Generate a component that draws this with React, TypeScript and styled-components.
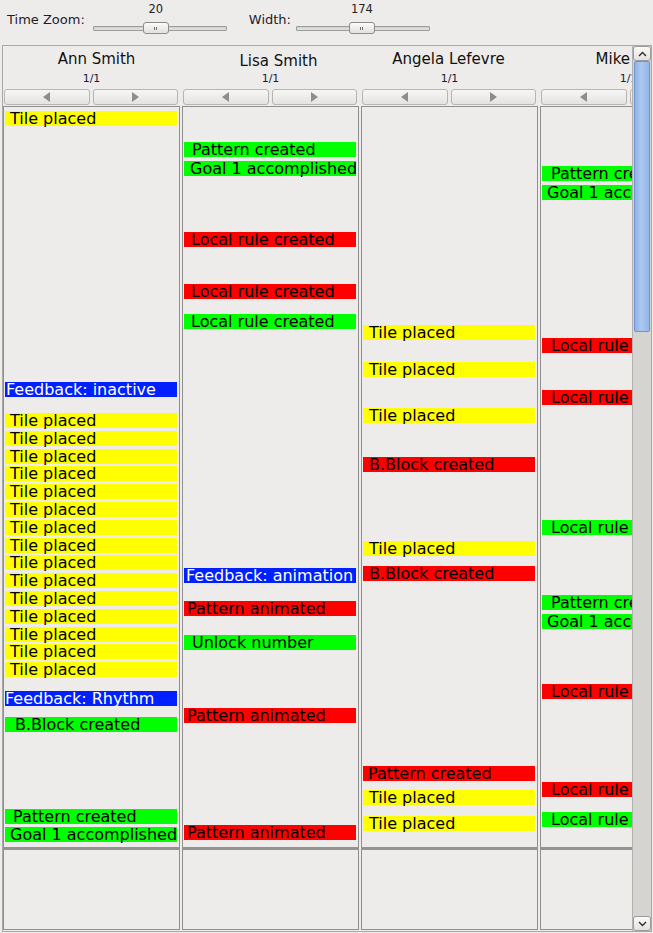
import React from "react";
import styled, { createGlobalStyle } from "styled-components";

type Kind = "y" | "g" | "r" | "b";
type Ev = [number, Kind, string, number];

interface ColumnData {
  name: string;
  shift: number;
  drop: number;
  events: Ev[];
}

const FILL: Record<Kind, string> = {
  y: "#ffff00",
  g: "#00ff00",
  r: "#ff0000",
  b: "#0020ff",
};

const tiles: Ev[] = Array.from({ length: 15 }, (_, i) => [
  Math.round(306 + i * 17.8),
  "y",
  "Tile placed",
  5,
]);

const COLUMNS: ColumnData[] = [
  {
    name: "Ann Smith",
    shift: 5,
    drop: 0,
    events: [
      [4, "y", "Tile placed", 5],
      [275, "b", "Feedback: inactive", 1],
      ...tiles,
      [584, "b", "Feedback: Rhythm", 0],
      [610, "g", "B.Block created", 10],
      [702, "g", "Pattern created", 8],
      [720, "g", "Goal 1 accomplished", 5],
    ],
  },
  {
    name: "Lisa Smith",
    shift: 8,
    drop: 2,
    events: [
      [35, "g", "Pattern created", 8],
      [54, "g", "Goal 1 accomplished", 6],
      [125, "r", "Local rule created", 7],
      [177, "r", "Local rule created", 7],
      [207, "g", "Local rule created", 7],
      [461, "b", "Feedback: animation", 2],
      [494, "r", "Pattern animated", 3],
      [528, "g", "Unlock number", 8],
      [601, "r", "Pattern animated", 3],
      [718, "r", "Pattern animated", 3],
    ],
  },
  {
    name: "Angela Lefevre",
    shift: -1,
    drop: 0,
    events: [
      [218, "y", "Tile placed", 6],
      [255, "y", "Tile placed", 6],
      [301, "y", "Tile placed", 6],
      [350, "r", "B.Block created", 6],
      [434, "y", "Tile placed", 6],
      [459, "r", "B.Block created", 6],
      [659, "r", "Pattern created", 5],
      [683, "y", "Tile placed", 6],
      [709, "y", "Tile placed", 6],
    ],
  },
  {
    name: "Mike Lee",
    shift: 0,
    drop: 0,
    events: [
      [59, "g", "Pattern created", 9],
      [78, "g", "Goal 1 accomplished", 5],
      [231, "r", "Local rule created", 9],
      [283, "r", "Local rule created", 9],
      [413, "g", "Local rule created", 9],
      [488, "g", "Pattern created", 9],
      [507, "g", "Goal 1 accomplished", 5],
      [577, "r", "Local rule created", 9],
      [675, "r", "Local rule created", 9],
      [705, "g", "Local rule created", 9],
    ],
  },
];

const GlobalStyle = createGlobalStyle`
  html, body {
    margin: 0;
    padding: 0;
    background: #edecea;
    font-family: "DejaVu Sans", "Noto Sans", sans-serif;
    color: #1d1b2e;
  }
`;

const Page = styled.div`
  width: 653px;
  height: 933px;
  overflow: hidden;
`;

const TopBar = styled.div`
  display: flex;
  align-items: flex-start;
  height: 45px;
  padding-left: 7px;
  box-sizing: border-box;
`;

const FieldLabel = styled.span<{ $before: number }>`
  margin-left: ${(p) => p.$before}px;
  margin-top: 12px;
  font-size: 13px;
  line-height: 16px;
  white-space: nowrap;
`;

const SliderBox = styled.div<{ $before: number }>`
  position: relative;
  width: 134px;
  height: 36px;
  margin-left: ${(p) => p.$before}px;
`;

const SliderValue = styled.div`
  position: absolute;
  top: 2px;
  width: 26px;
  font-size: 11.5px;
  line-height: 14px;
  text-align: center;
  color: #222;
`;

const SliderTrack = styled.div`
  margin-top: 26px;
  height: 5px;
  box-sizing: border-box;
  border: 1px solid #9a9a9a;
  background: linear-gradient(#d2d1ce, #e4e3e0);
  border-radius: 1px;
`;

const Thumb = styled.div`
  position: absolute;
  top: 22px;
  width: 26px;
  height: 12px;
  box-sizing: border-box;
  border: 1px solid #8e8c88;
  border-radius: 3px;
  background: linear-gradient(#fbfbfa, #e2e1de);
  display: flex;
  justify-content: center;
  align-items: center;
  gap: 1px;
`;

const Grip = styled.span`
  width: 1px;
  height: 3px;
  background: #6f6f6f;
`;

const Frame = styled.div`
  display: flex;
  margin-left: 2px;
  width: 650px;
  height: 887px;
  box-sizing: border-box;
  border: 1px solid #a9a8a5;
`;

const Viewport = styled.div`
  display: flex;
  gap: 2px;
  width: 629px;
  height: 885px;
  overflow: hidden;
`;

const Column = styled.div`
  flex: 0 0 177px;
  display: flex;
  flex-direction: column;
`;

const Header = styled.div`
  height: 60px;
  display: flex;
  flex-direction: column;
  padding-top: 4px;
  box-sizing: border-box;
`;

const Name = styled.div<{ $shift: number; $drop: number }>`
  height: 18px;
  box-sizing: border-box;
  padding-top: ${(p) => p.$drop}px;
  padding-left: ${(p) => Math.max(0, p.$shift * 2)}px;
  padding-right: ${(p) => Math.max(0, -p.$shift * 2)}px;
  font-size: 15px;
  line-height: 18px;
  text-align: center;
  white-space: nowrap;
  color: #111;
`;

const Pager = styled.div`
  margin-top: 4px;
  font-size: 11px;
  line-height: 14px;
  text-align: center;
  color: #1d1a3c;
`;

const ButtonRow = styled.div`
  display: flex;
  gap: 3px;
  margin-top: 3px;
  padding: 0 2px 0 1px;
`;

const PageButton = styled.button`
  flex: 1;
  height: 16px;
  padding: 0;
  border: 1px solid #b7b5b0;
  border-radius: 3px;
  background: linear-gradient(#f6f6f5, #e4e3e0);
  display: flex;
  align-items: center;
  justify-content: center;
`;

const Arrow = styled.span<{ $dir: "left" | "right" }>`
  width: 0;
  height: 0;
  border-top: 5.5px solid transparent;
  border-bottom: 5.5px solid transparent;
  ${(p) =>
    p.$dir === "left"
      ? "border-right: 7px solid #8d8d8d;"
      : "border-left: 7px solid #8d8d8d;"}
`;

const Track = styled.div`
  position: relative;
  height: 741px;
  box-sizing: border-box;
  border: 1px solid #8f8f8f;
  border-bottom: none;
  overflow: hidden;
`;

const Divider = styled.div`
  height: 3px;
  background: #939393;
`;

const LowerPane = styled.div`
  height: 80px;
  box-sizing: border-box;
  border: 1px solid #8f8f8f;
  border-top: none;
`;

const EventBar = styled.div<{ $kind: Kind; $indent: number }>`
  position: absolute;
  left: 1px;
  right: 2px;
  height: 15px;
  padding-left: ${(p) => p.$indent}px;
  background: ${(p) => FILL[p.$kind]};
  color: ${(p) => (p.$kind === "b" ? "#ffffff" : "#000000")};
  font-size: 16px;
  line-height: 15px;
  white-space: nowrap;
`;

const ScrollBar = styled.div`
  width: 19px;
  height: 885px;
  display: flex;
  flex-direction: column;
  background: #d6d4d0;
  box-sizing: border-box;
  border-left: 1px solid #b3b1ad;
`;

const ScrollButton = styled.div`
  height: 15px;
  box-sizing: border-box;
  border: 1px solid #9d9b97;
  border-radius: 3px;
  background: linear-gradient(#fafaf9, #e3e2df);
  display: flex;
  align-items: center;
  justify-content: center;
`;

const ScrollThumb = styled.div`
  height: 271px;
  margin: 0 1px;
  box-sizing: border-box;
  border: 1px solid #6f93cc;
  border-radius: 2px;
  background: linear-gradient(90deg, #8fb2e6, #abc8f0 45%, #93b6e9);
`;

const ScrollFill = styled.div`
  flex: 1;
`;

const Chevron = ({ up }: { up: boolean }) => (
  <svg width="9" height="6" viewBox="0 0 9 6">
    <path
      d={up ? "M1 5 L4.5 1.5 L8 5" : "M1 1 L4.5 4.5 L8 1"}
      fill="none"
      stroke="#2e2e2e"
      strokeWidth="1.4"
    />
  </svg>
);

const Slider = ({ value, fraction }: { value: number; fraction: number }) => {
  const left = Math.round(fraction * (134 - 26));
  return (
    <>
      <SliderValue style={{ left }}>{value}</SliderValue>
      <SliderTrack />
      <Thumb style={{ left }}>
        <Grip />
        <Grip />
      </Thumb>
    </>
  );
};

const StudentColumn = ({ data }: { data: ColumnData }) => (
  <Column>
    <Header>
      <Name $shift={data.shift} $drop={data.drop}>
        {data.name}
      </Name>
      <Pager>1/1</Pager>
      <ButtonRow>
        <PageButton>
          <Arrow $dir="left" />
        </PageButton>
        <PageButton>
          <Arrow $dir="right" />
        </PageButton>
      </ButtonRow>
    </Header>
    <Track>
      {data.events.map(([top, kind, label, indent], i) => (
        <EventBar key={i} $kind={kind} $indent={indent} style={{ top }}>
          {label}
        </EventBar>
      ))}
    </Track>
    <Divider />
    <LowerPane />
  </Column>
);

export default function App() {
  return (
    <Page>
      <GlobalStyle />
      <TopBar>
        <FieldLabel $before={0}>Time Zoom:</FieldLabel>
        <SliderBox $before={8}>
          <Slider value={20} fraction={0.463} />
        </SliderBox>
        <FieldLabel $before={22}>Width:</FieldLabel>
        <SliderBox $before={5}>
          <Slider value={174} fraction={0.49} />
        </SliderBox>
      </TopBar>
      <Frame>
        <Viewport>
          {COLUMNS.map((c) => (
            <StudentColumn key={c.name} data={c} />
          ))}
        </Viewport>
        <ScrollBar>
          <ScrollButton>
            <Chevron up />
          </ScrollButton>
          <ScrollThumb />
          <ScrollFill />
          <ScrollButton>
            <Chevron up={false} />
          </ScrollButton>
        </ScrollBar>
      </Frame>
    </Page>
  );
}
